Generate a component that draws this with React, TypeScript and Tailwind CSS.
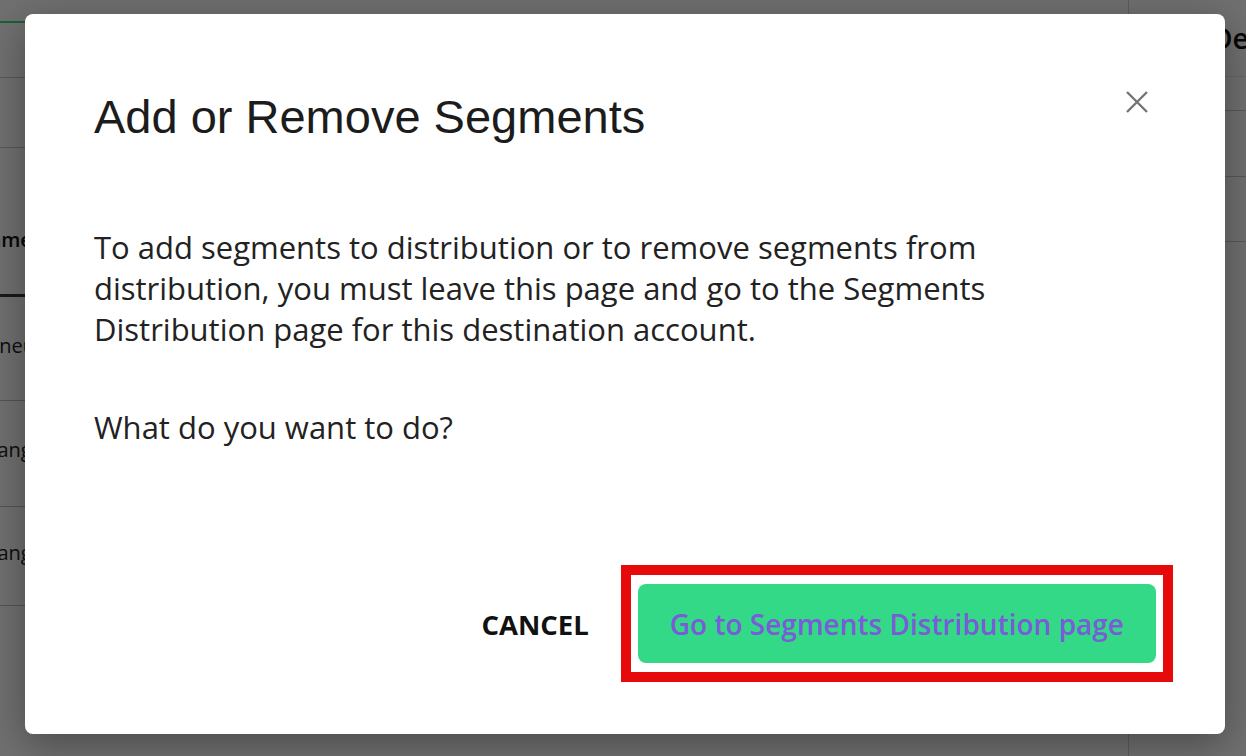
import React from "react";

export default function App() {
  return (
    <div className="relative h-[756px] w-[1246px] overflow-hidden bg-white font-['Open_Sans',sans-serif]">
      {/* underlying page */}
      <div className="flex h-full">
        <div className="flex w-[1129px] shrink-0 flex-col border-r border-[#d4d4d4]">
          <div className="h-[23px] border-b-2 border-[#3ddc84]" />
          <div className="h-[55px] border-b border-[#c8c8c8]" />
          <div className="h-[70px] border-b border-[#c8c8c8]" />
          <div className="flex h-[149px] items-center border-b-[3px] border-[#3a3a3a] pt-[37px]">
            <span className="-ml-[26px] whitespace-nowrap text-[20px] font-semibold text-[#111]">Name</span>
          </div>
          <div className="flex h-[104px] items-center border-b border-[#bdbdbd] pb-[6px]">
            <span className="-ml-[20px] whitespace-nowrap text-[20px] text-[#222]">Erneuerung</span>
          </div>
          <div className="flex h-[106px] items-center border-b border-[#bdbdbd] pb-[8px]">
            <span className="-ml-[13px] whitespace-nowrap text-[20px] text-[#222]">Langzeit</span>
          </div>
          <div className="flex h-[99px] items-center border-b border-[#bdbdbd] pb-[6px]">
            <span className="-ml-[13px] whitespace-nowrap text-[20px] text-[#222]">Langzeit</span>
          </div>
        </div>
        <div className="flex min-w-0 flex-1 flex-col overflow-hidden">
          <div className="flex h-[77px] items-center border-b border-[#e4e4e4] pl-[83px]">
            <span className="whitespace-nowrap text-[28px] font-semibold text-[#111]">Details</span>
          </div>
          <div className="h-[34px] border-b border-[#c8c8c8]" />
          <div className="h-[66px] border-b border-[#c8c8c8]" />
          <div className="h-[65px] border-b border-[#c8c8c8]" />
        </div>
      </div>

      {/* overlay */}
      <div className="absolute inset-0 bg-black/[0.56]" />

      {/* modal */}
      <div className="absolute inset-0 pl-[25px] pt-[14px]">
        <div className="relative flex h-[720px] w-[1200px] flex-col rounded-[8px] bg-white pl-[69px] pr-[52px] pt-[75px] pb-[52px] shadow-[0_10px_40px_rgba(0,0,0,0.35)]">
          <h2 className="font-['Liberation_Sans',Arial,sans-serif] text-[47px] leading-[56px] text-[#1c1c1c]">
            Add or Remove Segments
          </h2>
          <button className="absolute right-[77px] top-[77px] flex h-[22px] w-[22px] items-center justify-center" aria-label="Close">
            <svg width="22" height="22" viewBox="0 0 22 22" fill="none">
              <path d="M1 1L21 21M21 1L1 21" stroke="#757575" strokeWidth="2.4" />
            </svg>
          </button>
          <p className="mt-[82px] pr-[180px] text-[31px] leading-[41px] text-[#222]">
            To add segments to distribution or to remove segments from distribution, you must leave this page and go to the Segments Distribution page for this destination account.
          </p>
          <p className="mt-[57px] text-[31px] leading-[41px] text-[#222]">What do you want to do?</p>
          <div className="mt-auto flex items-center justify-end gap-[32px]">
            <button className="pt-[2px] text-[27.5px] font-bold leading-[38px] text-[#111]">CANCEL</button>
            <div className="border-[10px] border-[#e60a0a] px-[7px] py-[9px]">
              <button className="flex h-[79px] items-center rounded-[8px] bg-[#34d987] px-[32px] text-[28px] font-semibold text-[#7a5bd8]">
                Go to Segments Distribution page
              </button>
            </div>
          </div>
        </div>
      </div>
    </div>
  );
}
